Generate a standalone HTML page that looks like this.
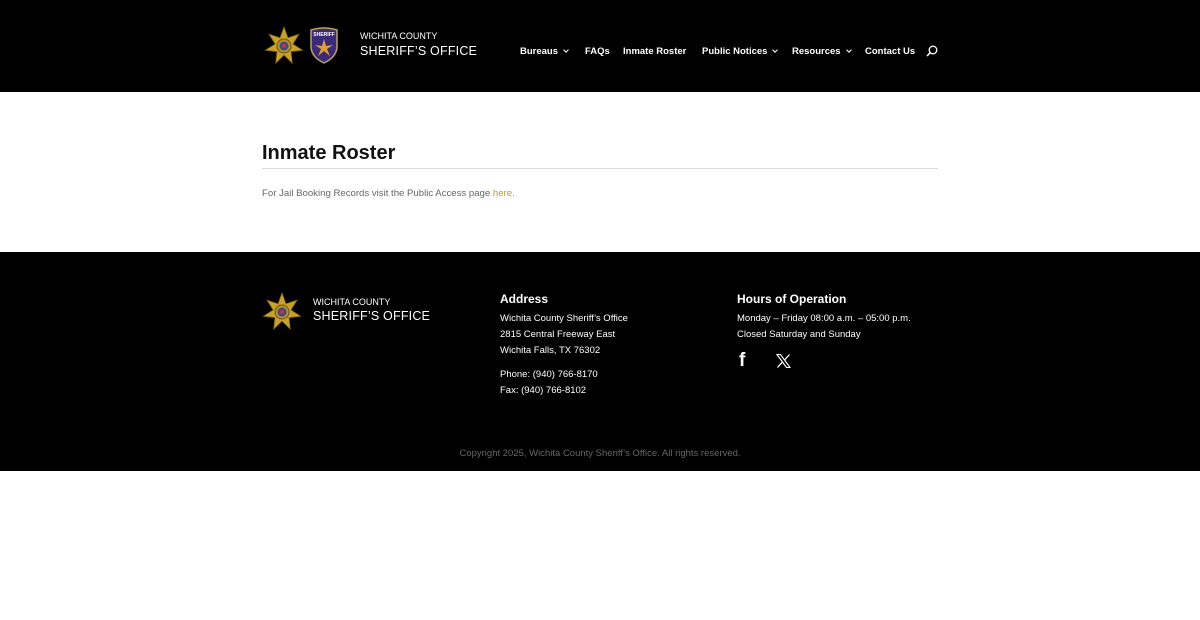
<!DOCTYPE html>
<html><head><meta charset="utf-8">
<style>
*{margin:0;padding:0;box-sizing:border-box}
body{width:1200px;height:620px;background:#fff;font-family:"Liberation Sans",sans-serif;position:relative;overflow:hidden}
.hdr{position:absolute;left:0;top:0;width:1200px;height:92px;background:#000}
.nav{position:absolute;top:46px;font-size:9.5px;font-weight:bold;color:#fff;white-space:nowrap}
.nav span{position:absolute;white-space:nowrap}
.chev{display:inline-block;width:4px;height:4px;border-right:1.2px solid #fff;border-bottom:1.2px solid #fff;transform:rotate(45deg);margin-left:6px;position:relative;top:-2px}
.ftr{position:absolute;left:0;top:252px;width:1200px;height:219px;background:#000;color:#fff}
.t{position:absolute;white-space:nowrap}
</style></head><body>
<svg width="0" height="0" style="position:absolute">
<defs>
<g id="star">
<polygon points="0,-19 3.9,-8.1 14.9,-11.8 8.8,-2 18.5,4.2 7,5.6 8.2,17.1 0,9 -8.2,17.1 -7,5.6 -18.5,4.2 -8.8,-2 -14.9,-11.8 -3.9,-8.1" fill="#c9a227" stroke="#8a6d10" stroke-width="0.8"/>
<circle r="7" fill="#b8902a" stroke="#6b5312" stroke-width="1"/>
<circle r="4.5" fill="#3a4a8a"/>
<circle r="2" fill="#c33"/>
</g>
</defs>
</svg>
<div class="hdr">
<svg style="position:absolute;left:264px;top:26px" width="40" height="40" viewBox="-20 -20 40 40"><use href="#star"/></svg>
<svg style="position:absolute;left:308px;top:26px" width="32" height="38" viewBox="0 0 32 38">
<path d="M3 4 Q16 0 29 4 L29 20 Q29 31 16 37 Q3 31 3 20 Z" fill="#3b2a78" stroke="#b9a25a" stroke-width="1.5"/>
<text x="16" y="10" font-size="5" fill="#fff" text-anchor="middle" font-family="Liberation Sans" font-weight="bold">SHERIFF</text>
<polygon points="16,13 18,20 25,19 19,23 22,30 16,25 10,30 13,23 7,19 14,20" fill="#e0a030"/>
</svg>
<div class="t" style="left:360px;top:31px;font-size:9px;color:#fff">WICHITA COUNTY</div>
<div class="t" style="left:360px;top:44px;font-size:12.5px;color:#fff;letter-spacing:0.2px">SHERIFF’S OFFICE</div>
<div class="nav">
<span style="left:520px">Bureaus<i class="chev"></i></span>
<span style="left:585px">FAQs</span>
<span style="left:623px">Inmate Roster</span>
<span style="left:702px">Public Notices<i class="chev"></i></span>
<span style="left:792px">Resources<i class="chev"></i></span>
<span style="left:865px">Contact Us</span>
</div>
<svg style="position:absolute;left:926px;top:45px" width="12" height="12" viewBox="0 0 12 12"><circle cx="7" cy="5" r="3.8" fill="none" stroke="#fff" stroke-width="1.3"/><path d="M4.3 7.7 L1 11" stroke="#fff" stroke-width="1.5"/></svg>
</div>
<div class="t" style="left:262px;top:142px;font-size:20px;font-weight:bold;color:#111">Inmate Roster</div>
<div style="position:absolute;left:262px;top:168px;width:676px;height:1px;background:#ddd"></div>
<div class="t" style="left:262px;top:188px;font-size:9.6px;color:#666">For Jail Booking Records visit the Public Access page <span style="color:#b59a2e">here.</span></div>
<div class="ftr">
<svg style="position:absolute;left:262px;top:40px" width="40" height="40" viewBox="-20 -20 40 40"><use href="#star"/></svg>
<div class="t" style="left:313px;top:45px;font-size:9px">WICHITA COUNTY</div>
<div class="t" style="left:313px;top:57px;font-size:12.5px;letter-spacing:0.2px">SHERIFF’S OFFICE</div>
<div class="t" style="left:500px;top:40px;font-size:12px;font-weight:bold">Address</div>
<div class="t" style="left:500px;top:59px;font-size:9.5px;line-height:16px">Wichita County Sheriff’s Office<br>2815 Central Freeway East<br>Wichita Falls, TX 76302</div>
<div class="t" style="left:500px;top:115px;font-size:9.5px;line-height:16px">Phone: (940) 766-8170<br>Fax: (940) 766-8102</div>
<div class="t" style="left:737px;top:40px;font-size:12px;font-weight:bold">Hours of Operation</div>
<div class="t" style="left:737px;top:59px;font-size:9.5px;line-height:16px">Monday – Friday 08:00 a.m. – 05:00 p.m.<br>Closed Saturday and Sunday</div>
<div class="t" style="left:739px;top:98px;font-size:19px;font-weight:bold">f</div>
<svg style="position:absolute;left:776px;top:102px" width="15" height="14" viewBox="0 0 15 14"><path d="M1 0.5 H4.5 L14 13.5 H10.5 Z" fill="none" stroke="#fff" stroke-width="1.1"/><path d="M13.5 0.5 L8.5 6 M1.5 13.5 L6.3 8.2" stroke="#fff" stroke-width="1.3"/></svg>
<div class="t" style="left:0;width:1200px;text-align:center;top:196px;font-size:9.5px;color:#666">Copyright 2025, Wichita County Sheriff’s Office. All rights reserved.</div>
</div>
</body></html>
